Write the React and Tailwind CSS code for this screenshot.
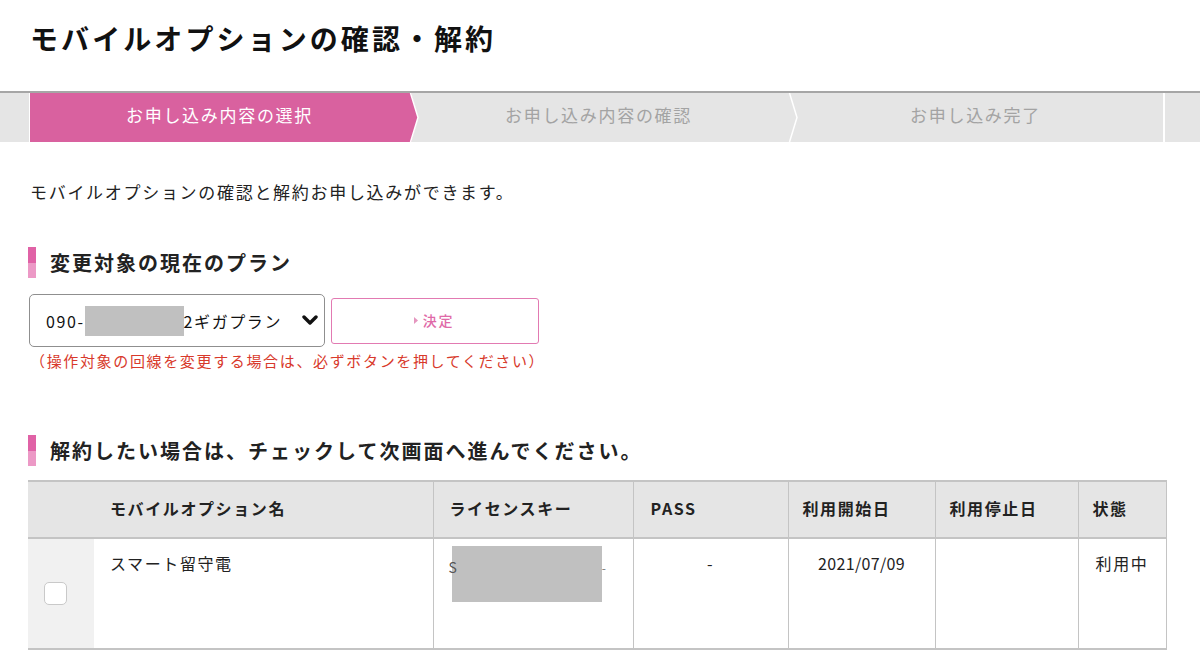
import React from "react";

const font = { fontFamily: '"Noto Sans CJK JP", "Noto Sans", sans-serif' };

const SectionTitle = ({ children }) => (
  <div className="flex h-[31px] items-center">
    <div className="flex h-[31px] w-[8px] flex-col">
      <div className="flex-1 bg-[#e062a6]" />
      <div className="flex-1 bg-[#ec99c6]" />
    </div>
    <h2 className="ml-[14px] text-[20px] font-bold leading-[31px] tracking-[0.1em] text-[#222]">{children}</h2>
  </div>
);

const StepArrow = ({ fill }) => (
  <svg className="absolute left-full top-0 z-10 h-full w-[10px]" viewBox="0 0 10 49" preserveAspectRatio="none">
    {fill && <polygon points="0,0 2,0 9,24.5 2,49 0,49" fill={fill} />}
    <polyline points="1.5,0 9,24.5 1.5,49" fill="none" stroke="#ffffff" strokeWidth="1.5" />
  </svg>
);

const App = () => {
  const steps = [
    { label: "お申し込み内容の選択", active: true, w: "w-[379px]" },
    { label: "お申し込み内容の確認", active: false, w: "w-[379px]" },
    { label: "お申し込み完了", active: false, w: "w-[377px]" },
  ];

  return (
    <div className="min-h-[669px] bg-white text-[#222]" style={font}>
      {/* page title */}
      <div className="h-[91px] pl-[30px] pt-[19px]">
        <h1 className="text-[28px] font-bold leading-[38px] tracking-[0.11em] text-[#111]">
          モバイルオプションの確認・解約
        </h1>
      </div>

      {/* steps */}
      <div className="flex h-[51px] border-t-2 border-[#a6a6a6] bg-[#e5e5e5]">
        <div className="w-[30px] border-r border-white" />
        {steps.map((s, i) => (
          <div
            key={s.label}
            className={`relative flex ${s.w} items-center justify-center pb-[5px] text-[17px] tracking-[0.1em] ${
              s.active ? "bg-[#d9619f] text-white" : "text-[#a3a3a3]"
            } ${i === 2 ? "border-r-2 border-white" : ""}`}
          >
            {s.label}
            {i === 0 && <StepArrow fill="#d9619f" />}
            {i === 1 && <StepArrow />}
          </div>
        ))}
        <div className="flex-1" />
      </div>

      <div className="px-[28px]">
        <p className="mt-[36px] pl-[2px] text-[17px] leading-[28px] tracking-[0.1em] text-[#222]">
          モバイルオプションの確認と解約お申し込みができます。
        </p>

        <div className="mt-[41px]">
          <SectionTitle>変更対象の現在のプラン</SectionTitle>
        </div>

        <div className="mt-[16px] flex items-center">
          <div className="ml-[1px] flex h-[53px] w-[296px] items-center rounded-[5px] border border-[#8f8f8f] pl-[16px] pr-[6px] text-[16px] tracking-[0.1em] text-[#111]">
            <span>090-</span>
            <span className="h-[30px] w-[99px] bg-[#c0c0c0]" />
            <span>2ギガプラン</span>
            <svg className="ml-auto" width="16" height="11" viewBox="0 0 16 11">
              <path d="M2 2 L8 8 L14 2" fill="none" stroke="#111" strokeWidth="3.4" strokeLinecap="round" strokeLinejoin="round" />
            </svg>
          </div>
          <button className="ml-[6px] flex h-[46px] w-[208px] items-center justify-center rounded-[3px] border border-[#e27ab2] bg-white pr-[2px] text-[14px] font-medium tracking-[0.12em] text-[#df6aa8]">
            <svg className="mr-[5px]" width="4" height="7" viewBox="0 0 4 7">
              <polygon points="0,0 4,3.5 0,7" fill="#e596bf" />
            </svg>
            決定
          </button>
        </div>

        <p className="mt-[3px] pl-[2px] text-[15px] leading-[22px] tracking-[0.11em] text-[#d8392b]">
          （操作対象の回線を変更する場合は、必ずボタンを押してください）
        </p>

        <div className="mt-[63px]">
          <SectionTitle>解約したい場合は、チェックして次画面へ進んでください。</SectionTitle>
        </div>

        <table className="mt-[14px] w-[1138px] table-fixed border-collapse text-[16px] tracking-[0.1em] text-[#222]">
          <colgroup>
            <col className="w-[66px]" />
            <col className="w-[339px]" />
            <col className="w-[200px]" />
            <col className="w-[155px]" />
            <col className="w-[147px]" />
            <col className="w-[143px]" />
            <col className="w-[88px]" />
          </colgroup>
          <thead>
            <tr className="h-[57px] border-t-2 border-[#c4c4c4] bg-[#e5e5e5] text-left font-bold">
              <th className="border-b-2 border-[#c4c4c4]" />
              <th className="border-b-2 border-[#c4c4c4] pb-[3px] pl-[16px] font-bold">モバイルオプション名</th>
              <th className="border-b-2 border-l border-[#c4c4c4] pb-[3px] pl-[16px] font-bold">ライセンスキー</th>
              <th className="border-b-2 border-l border-[#c4c4c4] pb-[3px] pl-[17px] font-bold">PASS</th>
              <th className="border-b-2 border-l border-[#c4c4c4] pb-[3px] pl-[14px] font-bold">利用開始日</th>
              <th className="border-b-2 border-l border-[#c4c4c4] pb-[3px] pl-[14px] font-bold">利用停止日</th>
              <th className="border-b-2 border-l border-r border-[#c4c4c4] pb-[3px] pl-[14px] font-bold">状態</th>
            </tr>
          </thead>
          <tbody>
            <tr className="h-[111px] border-b-2 border-[#c4c4c4] align-top">
              <td className="bg-[#f1f1f1] pl-[16px] align-middle">
                <div className="h-[23px] w-[23px] rounded-[5px] border-[1.5px] border-[#c9c9c9] bg-white" />
              </td>
              <td className="pl-[16px] pt-[11px] leading-[26px]">スマート留守電</td>
              <td className="border-l border-[#c4c4c4] pl-[18px] pt-[7px]">
                <div className="relative h-[56px] w-[150px] bg-[#c0c0c0]">
                  <span className="absolute left-[-3px] top-[14px] text-[14px] leading-none text-[#555]">S</span>
                  <span className="absolute right-[-6px] top-[16px] text-[12px] leading-none text-[#777]">-</span>
                </div>
              </td>
              <td className="border-l border-[#c4c4c4] pt-[11px] text-center leading-[26px]">-</td>
              <td className="border-l border-[#c4c4c4] pt-[11px] text-center leading-[26px] tracking-[0.02em]">2021/07/09</td>
              <td className="border-l border-[#c4c4c4]" />
              <td className="border-l border-r border-[#c4c4c4] pt-[11px] text-center leading-[26px]">利用中</td>
            </tr>
          </tbody>
        </table>
      </div>
    </div>
  );
};

export default App;
